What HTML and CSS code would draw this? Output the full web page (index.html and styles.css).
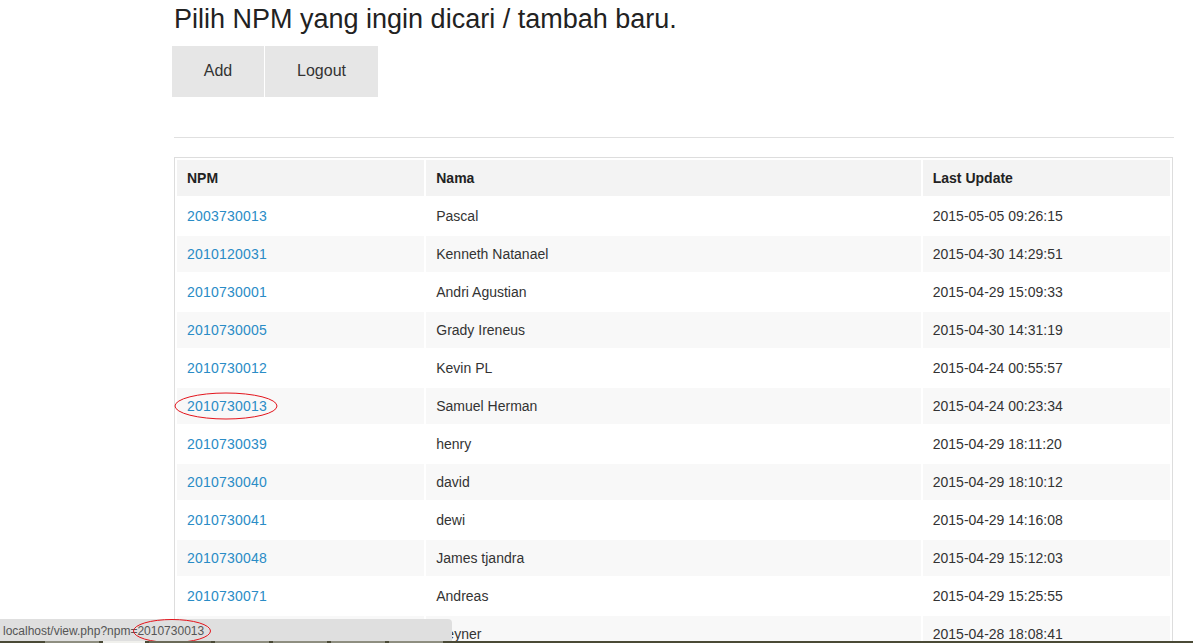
FILE: index.html
```html
<!DOCTYPE html>
<html lang="id">
<head>
<meta charset="utf-8">
<title>Pilih NPM</title>
<link rel="stylesheet" href="styles.css">
</head>
<body>
<div class="container">
  <h1 class="title">Pilih NPM yang ingin dicari / tambah baru.</h1>
  <div class="actions">
    <a class="btn btn-add" href="#">Add</a>
    <a class="btn btn-logout" href="#">Logout</a>
  </div>
  <hr class="divider">
  <table class="grid">
    <colgroup><col class="c1"><col class="c2"><col class="c3"></colgroup>
    <thead>
      <tr><th>NPM</th><th>Nama</th><th>Last Update</th></tr>
    </thead>
    <tbody>
      <tr><td><a href="#">2003730013</a></td><td>Pascal</td><td>2015-05-05 09:26:15</td></tr>
      <tr><td><a href="#">2010120031</a></td><td>Kenneth Natanael</td><td>2015-04-30 14:29:51</td></tr>
      <tr><td><a href="#">2010730001</a></td><td>Andri Agustian</td><td>2015-04-29 15:09:33</td></tr>
      <tr><td><a href="#">2010730005</a></td><td>Grady Ireneus</td><td>2015-04-30 14:31:19</td></tr>
      <tr><td><a href="#">2010730012</a></td><td>Kevin PL</td><td>2015-04-24 00:55:57</td></tr>
      <tr><td><a href="#">2010730013</a></td><td>Samuel Herman</td><td>2015-04-24 00:23:34</td></tr>
      <tr><td><a href="#">2010730039</a></td><td>henry</td><td>2015-04-29 18:11:20</td></tr>
      <tr><td><a href="#">2010730040</a></td><td>david</td><td>2015-04-29 18:10:12</td></tr>
      <tr><td><a href="#">2010730041</a></td><td>dewi</td><td>2015-04-29 14:16:08</td></tr>
      <tr><td><a href="#">2010730048</a></td><td>James tjandra</td><td>2015-04-29 15:12:03</td></tr>
      <tr><td><a href="#">2010730071</a></td><td>Andreas</td><td>2015-04-29 15:25:55</td></tr>
      <tr><td><a href="#">2010730078</a></td><td>Reyner</td><td>2015-04-28 18:08:41</td></tr>
      <tr><td><a href="#">2010730080</a></td><td>Yosua</td><td>2015-04-28 18:05:12</td></tr>
    </tbody>
  </table>
</div>

<svg class="mark mark-row" width="106" height="30" viewBox="0 0 106 30" aria-hidden="true">
  <ellipse cx="53" cy="15" rx="51" ry="13" fill="none" stroke="#e3141c" stroke-width="1"/>
</svg>

<div class="statusbar">localhost/view.php?npm=2010730013</div>

<svg class="mark mark-status" width="82" height="26" viewBox="0 0 82 26" aria-hidden="true">
  <ellipse cx="41" cy="13" rx="38.5" ry="11.5" fill="none" stroke="#e3141c" stroke-width="1"/>
</svg>

<div class="taskbar">
  <span class="tb tb-a"></span>
  <span class="tb tb-b"></span>
  <span class="tb tb-c"></span>
  <span class="tb tb-a"></span>
  <span class="tb tb-a"></span>
  <span class="tb tb-a"></span>
  <span class="tb tb-a"></span>
</div>
</body>
</html>
```
FILE: styles.css
```css
html, body {
  margin: 0;
  padding: 0;
  background: #ffffff;
}

body {
  font-family: "Liberation Sans", Arial, sans-serif;
  font-size: 14px;
  color: #333333;
  overflow: hidden;
}

.container {
  margin-left: 174px;
  width: 1000px;
  padding-top: 1px;
}

.title {
  margin: 0;
  font-size: 27px;
  line-height: 36px;
  font-weight: normal;
  color: #222222;
}

.actions {
  display: flex;
  gap: 1px;
  margin-top: 9px;
  margin-left: -2px;
}

.btn {
  display: block;
  height: 51px;
  line-height: 49px;
  background: #e6e6e6;
  color: #333333;
  font-size: 16px;
  text-align: center;
  text-decoration: none;
}

.btn-add { width: 92px; }
.btn-logout { width: 113px; }

.divider {
  margin: 40px 0 19px 0;
  border: 0;
  border-top: 1px solid #e0e0e0;
  height: 0;
}

.grid {
  width: 999px;
  border: 1px solid #dddddd;
  border-collapse: separate;
  border-spacing: 2px;
  table-layout: fixed;
}

.grid .c1 { width: 25%; }
.grid .c2 { width: 50%; }
.grid .c3 { width: 25%; }

.grid th,
.grid td {
  height: 36px;
  padding: 0 10px;
  text-align: left;
  vertical-align: middle;
  font-size: 14px;
  white-space: nowrap;
}

.grid th {
  background: #f3f3f3;
  color: #222222;
  font-weight: bold;
}

.grid td {
  color: #333333;
}

.grid tbody tr:nth-child(even) td {
  background: #f8f8f8;
}

.grid a {
  color: #2a8cc6;
  text-decoration: none;
  letter-spacing: 0.2px;
}

.mark {
  position: absolute;
  display: block;
}

.mark-row {
  left: 173px;
  top: 391px;
}

.statusbar {
  position: fixed;
  left: 0;
  bottom: 2px;
  width: 449px;
  height: 22px;
  padding-left: 3px;
  background: #dfdfdf;
  border-top-right-radius: 4px;
  color: #555555;
  font-size: 12px;
  line-height: 24px;
  white-space: nowrap;
}

.mark-status {
  position: fixed;
  left: 131px;
  top: 618px;
}

.taskbar {
  position: fixed;
  left: 0;
  right: 0;
  bottom: 0;
  height: 2px;
  background: #4a4a36;
  display: flex;
  gap: 4px;
  padding-left: 45px;
}

.tb {
  display: block;
  width: 54px;
  height: 2px;
}

.tb-a { background: #8e8e80; }
.tb-b { background: #f0f0ec; width: 42px; }
.tb-c { background: #6a6a58; width: 62px; }
```
